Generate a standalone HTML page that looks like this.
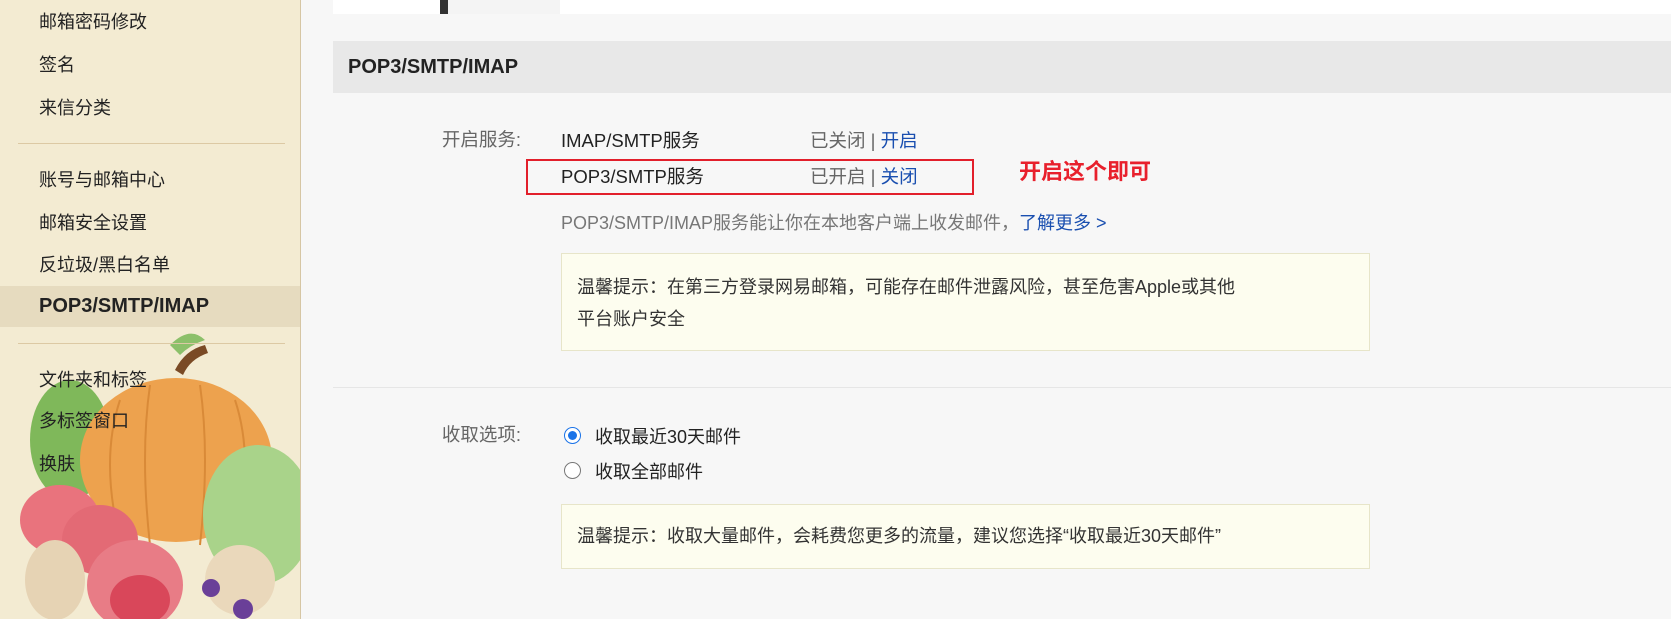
<!DOCTYPE html>
<html><head><meta charset="utf-8">
<style>
*{margin:0;padding:0;box-sizing:border-box}
body{width:1671px;height:619px;overflow:hidden;background:#f7f7f7;font-family:"Liberation Sans","Noto Sans CJK SC",sans-serif;position:relative}
.side{position:absolute;left:0;top:0;width:301px;height:619px;background:#f3ebd2;border-right:1px solid #d6c6a4;overflow:hidden}
.si{position:absolute;left:39px;font-size:18px;color:#222;line-height:24px;white-space:nowrap}
.sep{position:absolute;left:18px;width:267px;height:1px;background:#dcc9a4}
.act{position:absolute;left:0;top:286px;width:300px;height:41px;background:#e6dbbf}
.a{position:absolute;white-space:nowrap;line-height:24px}
.lk{color:#1a4fb0}
.tip{position:absolute;left:561px;width:809px;background:#fdfdef;border:1px solid #e7e5c9}
.radio{position:absolute;width:17px;height:17px;border-radius:50%;border:1.5px solid #777;background:#fff}
</style></head><body>
<div class="side">
<svg style="position:absolute;left:0;top:330px" width="300" height="289" viewBox="0 0 300 289">
<path d="M175 40 q10-20 30-25 l3 8 q-18 6-25 22z" fill="#7a4a25"/>
<path d="M170 15 q20-20 35-5 q-15 5-25 15z" fill="#8cc06a"/>
<ellipse cx="70" cy="110" rx="40" ry="60" fill="#7fb85a"/>
<ellipse cx="176" cy="130" rx="96" ry="82" fill="#eda24e"/>
<path d="M120 70 q-20 60 0 140 M150 55 q-10 70 0 160 M200 55 q10 70 0 160 M235 70 q20 60 0 140" stroke="#d98a38" stroke-width="2" fill="none"/>
<ellipse cx="258" cy="185" rx="55" ry="70" fill="#a9d38a"/>
<ellipse cx="60" cy="190" rx="40" ry="35" fill="#e9737d"/>
<ellipse cx="100" cy="210" rx="38" ry="35" fill="#e36a75"/>
<ellipse cx="135" cy="255" rx="48" ry="45" fill="#e87c86"/>
<ellipse cx="55" cy="250" rx="30" ry="40" fill="#e6d3b4"/>
<ellipse cx="240" cy="250" rx="35" ry="35" fill="#ead8bb"/>
<ellipse cx="140" cy="270" rx="30" ry="25" fill="#d9475a"/>
<circle cx="211" cy="258" r="9" fill="#6a3f98"/>
<circle cx="243" cy="279" r="10" fill="#6a3f98"/>
</svg>
<div class="si" style="top:10px">邮箱密码修改</div>
<div class="si" style="top:53px">签名</div>
<div class="si" style="top:96px">来信分类</div>
<div class="sep" style="top:143px"></div>
<div class="si" style="top:168px">账号与邮箱中心</div>
<div class="si" style="top:211px">邮箱安全设置</div>
<div class="si" style="top:253px">反垃圾/黑白名单</div>
<div class="act"></div>
<div class="si" style="top:294px;font-weight:bold;font-size:20px">POP3/SMTP/IMAP</div>
<div class="sep" style="top:343px"></div>
<div class="si" style="top:368px">文件夹和标签</div>
<div class="si" style="top:409px">多标签窗口</div>
<div class="si" style="top:452px">换肤</div>
</div>
<div style="position:absolute;left:333px;top:0;width:1338px;height:14px;background:#fff"></div>
<div style="position:absolute;left:440px;top:0;width:120px;height:14px;background:#f4f4f4"></div>
<div style="position:absolute;left:440px;top:0;width:8px;height:14px;background:#333"></div>
<div style="position:absolute;left:333px;top:41px;width:1338px;height:52px;background:#e8e8e8"></div>
<div class="a" style="left:348px;top:55px;font-size:20px;font-weight:bold;color:#222">POP3/SMTP/IMAP</div>
<div class="a" style="left:420px;top:128px;width:101px;text-align:right;font-size:18.5px;color:#666">开启服务:</div>
<div class="a" style="left:561px;top:129px;font-size:18.5px;color:#222">IMAP/SMTP服务</div>
<div class="a" style="left:810px;top:129px;font-size:18.5px;color:#666">已关闭 | <span class="lk">开启</span></div>
<div style="position:absolute;left:526px;top:159px;width:448px;height:36px;border:2px solid #e21f2b"></div>
<div class="a" style="left:561px;top:165px;font-size:18.5px;color:#222">POP3/SMTP服务</div>
<div class="a" style="left:810px;top:165px;font-size:18.5px;color:#666">已开启 | <span class="lk">关闭</span></div>
<div class="a" style="left:1019px;top:160px;font-size:22px;font-weight:bold;color:#e8202c">开启这个即可</div>
<div class="a" style="left:561px;top:211px;font-size:18px;color:#777">POP3/SMTP/IMAP服务能让你在本地客户端上收发邮件，<span class="lk">了解更多 &gt;</span></div>
<div class="tip" style="top:253px;height:98px"></div>
<div class="a" style="left:577px;top:275px;font-size:18px;color:#333">温馨提示：在第三方登录网易邮箱，可能存在邮件泄露风险，甚至危害Apple或其他</div>
<div class="a" style="left:577px;top:307px;font-size:18px;color:#333">平台账户安全</div>
<div style="position:absolute;left:333px;top:387px;width:1338px;height:1px;background:#e6e6e6"></div>
<div class="a" style="left:420px;top:423px;width:101px;text-align:right;font-size:18.5px;color:#666">收取选项:</div>
<div class="radio" style="left:564px;top:427px;border-color:#1a73e8"><div style="position:absolute;left:2.5px;top:2.5px;width:9px;height:9px;border-radius:50%;background:#1a73e8"></div></div>
<div class="a" style="left:595px;top:425px;font-size:18px;color:#222">收取最近30天邮件</div>
<div class="radio" style="left:564px;top:462px"></div>
<div class="a" style="left:595px;top:460px;font-size:18px;color:#222">收取全部邮件</div>
<div class="tip" style="top:504px;height:65px"></div>
<div class="a" style="left:577px;top:524px;font-size:18px;color:#333">温馨提示：收取大量邮件，会耗费您更多的流量，建议您选择“收取最近30天邮件”</div>
</body></html>
